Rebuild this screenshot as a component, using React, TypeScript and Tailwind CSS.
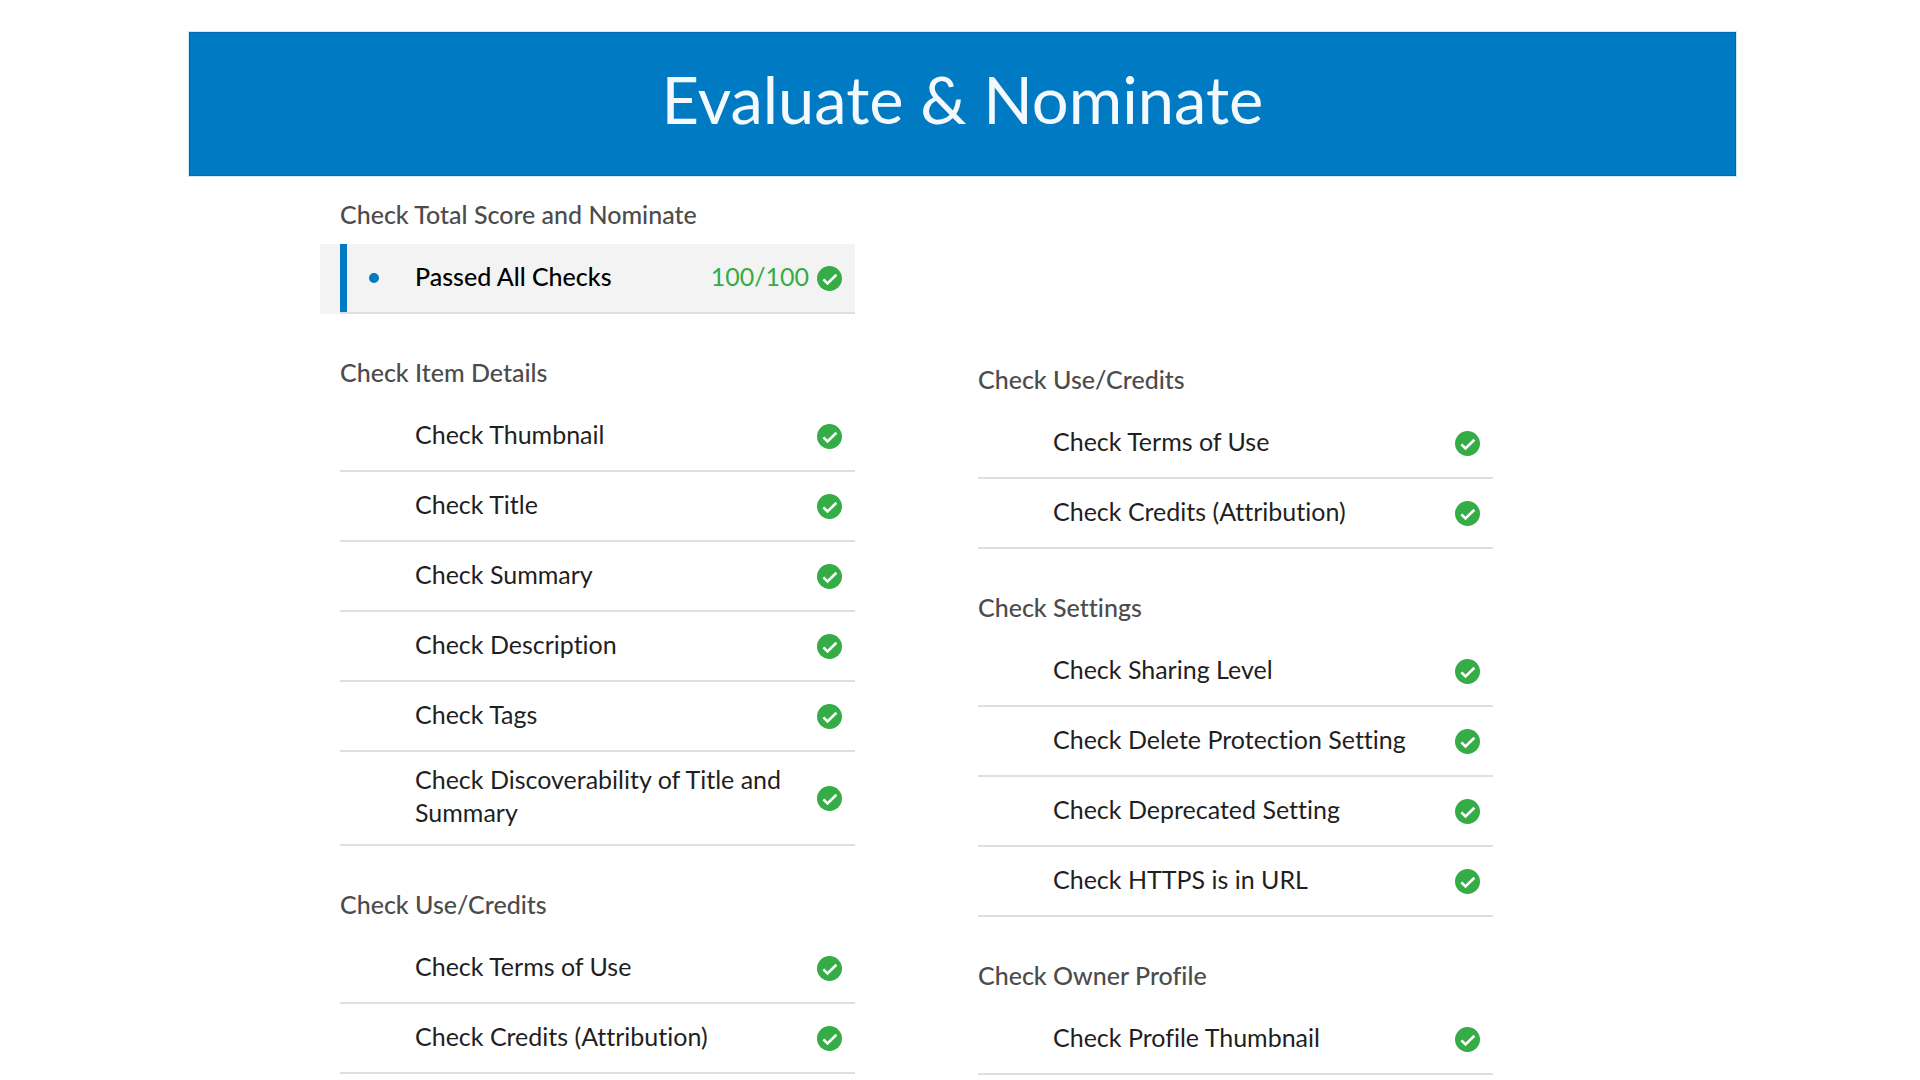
import clsx from "clsx";

type CheckItem = {
  label: string;
  score?: string;
  active?: boolean;
};

type Section = {
  title: string;
  items: CheckItem[];
};

const useCredits: Section = {
  title: "Check Use/Credits",
  items: [
    { label: "Check Terms of Use" },
    { label: "Check Credits (Attribution)" },
  ],
};

const leftSections: Section[] = [
  {
    title: "Check Total Score and Nominate",
    items: [{ label: "Passed All Checks", score: "100/100", active: true }],
  },
  {
    title: "Check Item Details",
    items: [
      { label: "Check Thumbnail" },
      { label: "Check Title" },
      { label: "Check Summary" },
      { label: "Check Description" },
      { label: "Check Tags" },
      { label: "Check Discoverability of Title and Summary" },
    ],
  },
  useCredits,
];

const rightSections: Section[] = [
  useCredits,
  {
    title: "Check Settings",
    items: [
      { label: "Check Sharing Level" },
      { label: "Check Delete Protection Setting" },
      { label: "Check Deprecated Setting" },
      { label: "Check HTTPS is in URL" },
    ],
  },
  {
    title: "Check Owner Profile",
    items: [{ label: "Check Profile Thumbnail" }],
  },
];

function PassedIcon() {
  return (
    <svg viewBox="0 0 25 25" className="mt-1 h-[25px] w-[25px] shrink-0">
      <circle cx="12.5" cy="12.5" r="12.5" fill="#35ac46" />
      <path
        d="M6.4 13.3l4.1 4.2L19.4 8.8"
        fill="none"
        stroke="#fff"
        strokeWidth="2.6"
      />
    </svg>
  );
}

function CheckRow({ label, score, active }: CheckItem) {
  return (
    <li className={clsx(active && "-ml-5 bg-[#f3f3f3] pl-5")}>
      <div className="flex min-h-[70px] items-stretch border-b-2 border-[#dfdfdf]">
        <div className="flex w-[75px] shrink-0 items-center">
          {active && (
            <>
              <span className="w-[7px] self-stretch bg-[#007ac2]" />
              <span className="ml-[22px] h-2.5 w-2.5 rounded-full bg-[#007ac2]" />
            </>
          )}
        </div>
        <div className="flex flex-1 items-center pt-[11px] pr-[13px] pb-[15px]">
          <span
            className={clsx(
              "flex-1 pr-6",
              active ? "font-medium text-black" : "text-[#1f1f1f]"
            )}
          >
            {label}
          </span>
          {score && <span className="mr-2 text-[#35ac46]">{score}</span>}
          <PassedIcon />
        </div>
      </div>
    </li>
  );
}

function CheckSection({ title, items }: Section) {
  return (
    <section>
      <h2 className="mb-[14px] leading-8 font-medium text-[#4c4c4c]">
        {title}
      </h2>
      <ul>
        {items.map((item) => (
          <CheckRow key={item.label} {...item} />
        ))}
      </ul>
    </section>
  );
}

export default function App() {
  return (
    <div className="bg-white pt-8 font-['Lato',sans-serif] text-[25px] leading-[33px] [font-variant-ligatures:none]">
      <header className="mr-[184px] ml-[189px] flex h-[144px] items-center justify-center border border-[#0068b8] bg-[#007ac2] ring-1 ring-[#d3e8f6]">
        <h1 className="pb-2.5 text-[65px] leading-[80px] text-[#f4f9fd]">
          Evaluate &amp; Nominate
        </h1>
      </header>
      <main className="grid grid-cols-2 gap-x-[123px] pt-[22px] pr-[427px] pl-[340px]">
        <div className="flex flex-col gap-[42px]">
          {leftSections.map((section) => (
            <CheckSection key={section.title} {...section} />
          ))}
        </div>
        <div className="flex flex-col gap-[42px] pt-[165px]">
          {rightSections.map((section) => (
            <CheckSection key={section.title} {...section} />
          ))}
        </div>
      </main>
    </div>
  );
}
